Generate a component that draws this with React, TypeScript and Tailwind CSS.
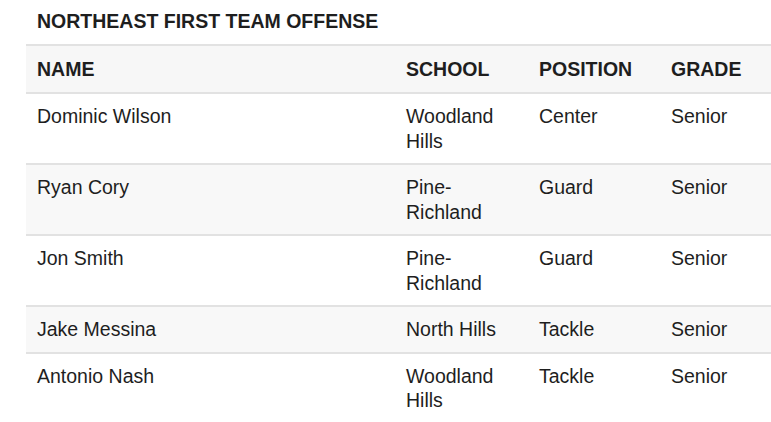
import React from "react";

const rows = [
  { name: "Dominic Wilson", school: "Woodland Hills", position: "Center", grade: "Senior" },
  { name: "Ryan Cory", school: "Pine-Richland", position: "Guard", grade: "Senior" },
  { name: "Jon Smith", school: "Pine-Richland", position: "Guard", grade: "Senior" },
  { name: "Jake Messina", school: "North Hills", position: "Tackle", grade: "Senior" },
  { name: "Antonio Nash", school: "Woodland Hills", position: "Tackle", grade: "Senior" },
];

export default function App() {
  return (
    <div
      className="w-[771px] h-[422px] overflow-hidden bg-white text-[#1e1e1e] pl-[26px]"
      style={{ fontFamily: '"Liberation Sans", Arial, sans-serif' }}
    >
      <h2 className="pt-[9px] pl-[11px] text-[19.5px] leading-[24px] font-bold h-[44px]">
        NORTHEAST FIRST TEAM OFFENSE
      </h2>
      <table className="w-[745px] border-collapse table-fixed text-[19.5px] leading-[24.5px]">
        <colgroup>
          <col className="w-[369px]" />
          <col className="w-[133px]" />
          <col className="w-[132px]" />
          <col />
        </colgroup>
        <thead>
          <tr className="bg-[#f7f7f7] border-t-2 border-b-2 border-[#e2e2e2]">
            <th className="text-left font-bold px-[11px] py-[11px] leading-[24px] align-top">NAME</th>
            <th className="text-left font-bold px-[11px] py-[11px] leading-[24px] align-top">SCHOOL</th>
            <th className="text-left font-bold px-[11px] py-[11px] leading-[24px] align-top">POSITION</th>
            <th className="text-left font-bold px-[11px] py-[11px] leading-[24px] align-top">GRADE</th>
          </tr>
        </thead>
        <tbody>
          {rows.map((r, i) => (
            <tr
              key={i}
              className={`border-t-2 border-[#e2e2e2] ${i % 2 === 1 ? "bg-[#f8f8f8]" : "bg-white"}`}
            >
              <td className="px-[11px] py-[10px] align-top">{r.name}</td>
              <td className="px-[11px] py-[10px] align-top">{r.school}</td>
              <td className="px-[11px] py-[10px] align-top">{r.position}</td>
              <td className="px-[11px] py-[10px] align-top">{r.grade}</td>
            </tr>
          ))}
        </tbody>
      </table>
    </div>
  );
}
